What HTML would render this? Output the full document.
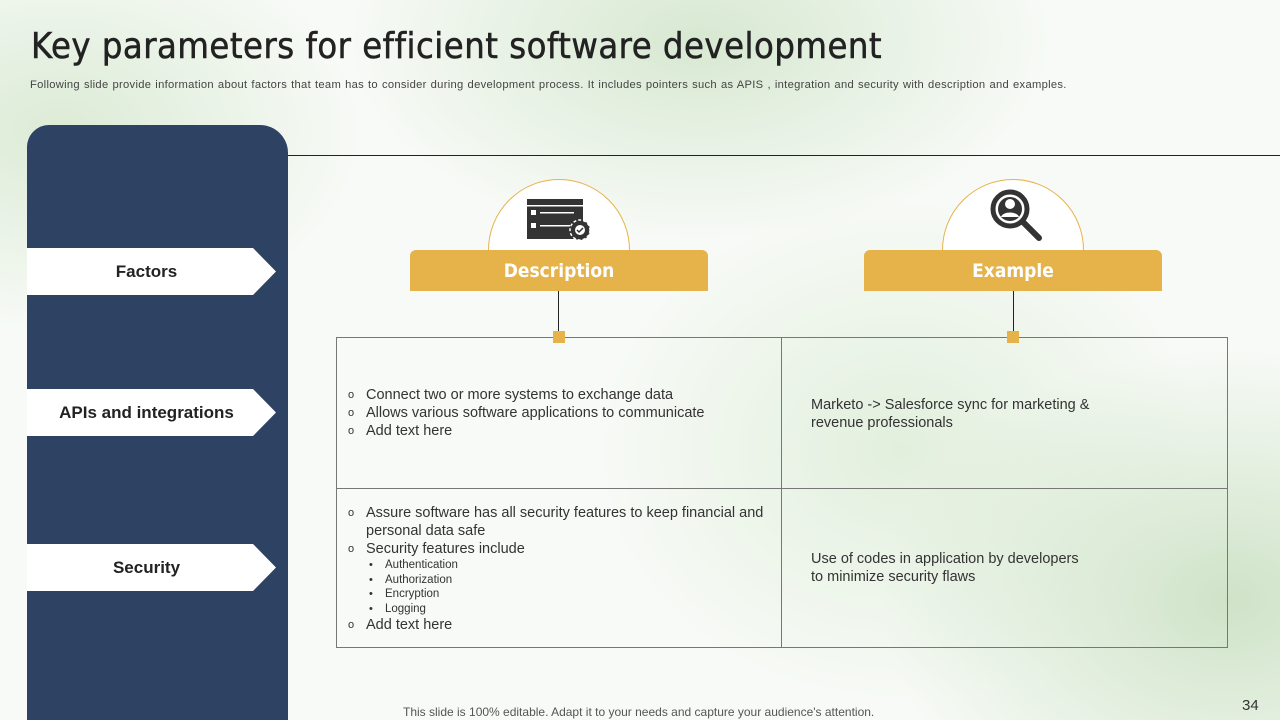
<!DOCTYPE html>
<html><head><meta charset="utf-8"><style>
body{margin:0;width:1280px;height:720px;overflow:hidden;position:relative;font-family:"Liberation Sans",sans-serif;
background:radial-gradient(ellipse 300px 200px at 60px 130px,#dcebd6,transparent),radial-gradient(ellipse 350px 250px at 1230px 600px,#cfe3c8,transparent),radial-gradient(ellipse 350px 200px at 700px 40px,#d7e8d1,transparent),radial-gradient(ellipse 300px 250px at 900px 450px,#e2efdd,transparent),#f7faf6;}
.a{position:absolute}
h1{position:absolute;left:31px;top:26px;margin:0;font-family:"DejaVu Sans Condensed","Liberation Sans",sans-serif;font-weight:normal;font-size:36px;color:#222;letter-spacing:0.5px;-webkit-text-stroke:0.5px #222}
.sub{left:30px;top:79px;font-size:11.2px;color:#444;letter-spacing:0.3px;word-spacing:0.6px}
.nav{left:27px;top:125px;width:261px;height:595px;background:#2e4263;border-radius:22px 28px 0 0}
.lab{left:27px;width:249px;height:47px;background:#fff;clip-path:polygon(0 0,226px 0,100% 50%,226px 100%,0 100%);font-weight:bold;font-size:17px;color:#222;display:flex;align-items:center;justify-content:center;padding-right:10px;box-sizing:border-box}
.hd{width:298px;height:41px;background:#e6b34a;border-radius:6px 6px 0 0;color:#fff;font-weight:bold;font-size:19px;display:flex;align-items:center;justify-content:center;font-family:"DejaVu Sans Condensed",sans-serif}
.arc{width:142px;height:142px;border:1px solid #e6b34a;border-radius:50%;box-sizing:border-box;background:#fff}
.cell{position:absolute;font-size:14.5px;color:#333;line-height:18px}
.cell ul{margin:0;padding:0;list-style:none}
.cell li{position:relative;padding-left:18px}
.cell li:before{content:"o";position:absolute;left:0;font-size:11px}
.cell .s{font-size:11.5px;line-height:14.5px;padding-left:37px}
.cell .s:before{content:"•";left:21px}
</style></head><body>
<h1>Key parameters for efficient software development</h1>
<div class="a sub">Following slide provide information about factors that team has to consider during development process. It includes pointers such as APIS , integration and security with description and examples.</div>
<div class="a nav"></div>
<div class="a" style="left:288px;top:155px;width:992px;height:1px;background:#222"></div>
<div class="a lab" style="top:248px">Factors</div>
<div class="a lab" style="top:389px">APIs and integrations</div>
<div class="a lab" style="top:544px">Security</div>

<div class="a" style="left:488px;top:179px;width:143px;height:72px;overflow:hidden"><div class="arc"></div></div>
<div class="a" style="left:942px;top:179px;width:143px;height:72px;overflow:hidden"><div class="arc"></div></div>
<svg class="a" style="left:526px;top:198px" width="66" height="44" viewBox="0 0 66 44"><rect x="1" y="1" width="56" height="40" fill="#333"/><rect x="1" y="7" width="56" height="1.5" fill="#fff"/><rect x="5" y="12" width="5" height="5" fill="#fff"/><rect x="14" y="14" width="34" height="1.5" fill="#fff"/><rect x="5" y="25" width="5" height="5" fill="#fff"/><rect x="14" y="27" width="30" height="1.5" fill="#fff"/><circle cx="54" cy="32" r="10" fill="#333" stroke="#fff" stroke-width="1.5" stroke-dasharray="3 2"/><circle cx="54" cy="32" r="5" fill="#fff"/><path d="M51 32l2 2 4-4" stroke="#333" stroke-width="1.5" fill="none"/></svg>
<svg class="a" style="left:989px;top:188px" width="56" height="56" viewBox="0 0 56 56"><circle cx="21" cy="21" r="17" fill="none" stroke="#333" stroke-width="5"/><circle cx="21" cy="21" r="12" fill="#333"/><circle cx="21" cy="16" r="5" fill="#fff"/><path d="M12 29c2-6 16-6 18 0" fill="#fff"/><path d="M34 34l16 16" stroke="#333" stroke-width="6" stroke-linecap="round"/></svg>
<div class="a hd" style="left:410px;top:250px">Description</div>
<div class="a hd" style="left:864px;top:250px">Example</div>
<div class="a" style="left:558px;top:291px;width:1px;height:46px;background:#222"></div>
<div class="a" style="left:1013px;top:291px;width:1px;height:46px;background:#222"></div>

<div class="a" style="left:336px;top:337px;width:890px;height:309px;border:1px solid #777"></div>
<div class="a" style="left:781px;top:337px;width:1px;height:310px;background:#777"></div>
<div class="a" style="left:336px;top:488px;width:891px;height:1px;background:#777"></div>
<div class="a" style="left:553px;top:331px;width:12px;height:12px;background:#e6b34a"></div>
<div class="a" style="left:1007px;top:331px;width:12px;height:12px;background:#e6b34a"></div>

<div class="cell" style="left:348px;top:386px"><ul><li>Connect two or more systems to exchange data</li><li>Allows various software applications to communicate</li><li>Add text here</li></ul></div>
<div class="cell" style="left:811px;top:396px">Marketo -&gt; Salesforce sync for marketing &amp;<br>revenue professionals</div>
<div class="cell" style="left:348px;top:504px;width:430px"><ul><li>Assure software has all security features to keep financial and personal data safe</li><li>Security features include</li><li class="s">Authentication</li><li class="s">Authorization</li><li class="s">Encryption</li><li class="s">Logging</li><li>Add text here</li></ul></div>
<div class="cell" style="left:811px;top:550px">Use of codes in application by developers<br>to minimize security flaws</div>

<div class="a" style="left:403px;top:705px;font-size:12px;color:#555">This slide is 100% editable. Adapt it to your needs and capture your audience's attention.</div>
<div class="a" style="left:1242px;top:697px;font-size:15px;color:#333">34</div>
</body></html>
